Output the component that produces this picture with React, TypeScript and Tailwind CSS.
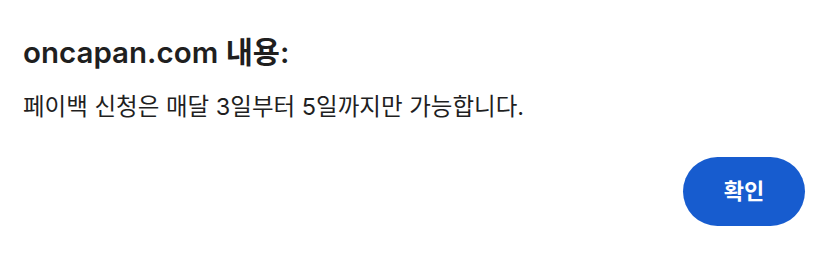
import React from 'react';

export default function App() {
  return (
    <div
      className="w-[835px] h-[261px] bg-white text-[#1f1f1f] px-[23px] pt-[34px]"
      style={{ fontFamily: 'Inter, "Noto Sans CJK KR", sans-serif' }}
    >
      <h1 className="text-[29.5px] leading-[36px] font-semibold">oncapan.com 내용:</h1>
      <p className="mt-[22px] text-[23.5px] leading-[30px]">
        페이백 신청은 매달 3일부터 5일까지만 가능합니다.
      </p>
      <div className="flex justify-end pr-[7px] mt-[35px]">
        <button className="w-[122px] h-[69px] rounded-full bg-[#175ccf] text-white text-[22px] font-semibold">
          확인
        </button>
      </div>
    </div>
  );
}
